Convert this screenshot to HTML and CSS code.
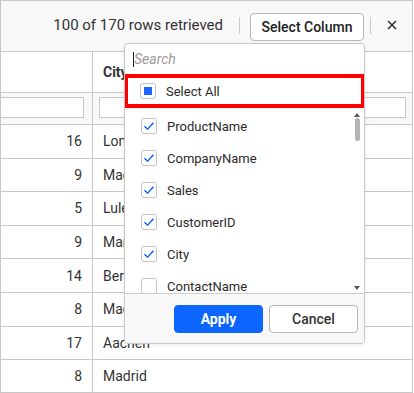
FILE: index.html
```html
<!DOCTYPE html>
<html>
<head>
<meta charset="utf-8">
<link rel="stylesheet" href="styles.css">
</head>
<body>
<div class="grid">
  <div class="toolbar">
    <span class="status">100 of 170 rows retrieved</span>
    <span class="sep sep1"></span>
    <button class="btn-select">Select Column</button>
    <span class="sep sep2"></span>
    <span class="close"><svg width="10" height="10" viewBox="0 0 10 10"><path d="M1 1L9 9M9 1L1 9" stroke="#333" stroke-width="1.6" fill="none"/></svg></span>
  </div>
  <div class="row header">
    <div class="cell num"></div>
    <div class="cell city"><b>City</b></div>
  </div>
  <div class="row filter">
    <div class="cell num"><span class="finput first"></span></div>
    <div class="cell city"><span class="finput"></span></div>
  </div>
  <div class="row data"><div class="cell num">16</div><div class="cell city">London</div></div>
  <div class="row data"><div class="cell num">9</div><div class="cell city">Madrid</div></div>
  <div class="row data"><div class="cell num">5</div><div class="cell city">Luleå</div></div>
  <div class="row data"><div class="cell num">9</div><div class="cell city">Mannheim</div></div>
  <div class="row data"><div class="cell num">14</div><div class="cell city">Berlin</div></div>
  <div class="row data"><div class="cell num">8</div><div class="cell city">Madrid</div></div>
  <div class="row data"><div class="cell num">17</div><div class="cell city">Aachen</div></div>
  <div class="row data last"><div class="cell num">8</div><div class="cell city">Madrid</div></div>

  <div class="popup">
    <div class="search"><span class="caret"></span><span class="ph">Search</span></div>
    <div class="item selectall">
      <span class="cb"><span class="ind"></span></span><span>Select All</span>
    </div>
    <div class="list">
      <div class="item"><span class="cb"><svg width="12" height="10" viewBox="0 0 12 10"><path d="M1.5 5.2L4.6 8.2L10.5 1.8" stroke="#1a6cff" stroke-width="1.6" fill="none"/></svg></span><span>ProductName</span></div>
      <div class="item"><span class="cb"><svg width="12" height="10" viewBox="0 0 12 10"><path d="M1.5 5.2L4.6 8.2L10.5 1.8" stroke="#1a6cff" stroke-width="1.6" fill="none"/></svg></span><span>CompanyName</span></div>
      <div class="item"><span class="cb"><svg width="12" height="10" viewBox="0 0 12 10"><path d="M1.5 5.2L4.6 8.2L10.5 1.8" stroke="#1a6cff" stroke-width="1.6" fill="none"/></svg></span><span>Sales</span></div>
      <div class="item"><span class="cb"><svg width="12" height="10" viewBox="0 0 12 10"><path d="M1.5 5.2L4.6 8.2L10.5 1.8" stroke="#1a6cff" stroke-width="1.6" fill="none"/></svg></span><span>CustomerID</span></div>
      <div class="item"><span class="cb"><svg width="12" height="10" viewBox="0 0 12 10"><path d="M1.5 5.2L4.6 8.2L10.5 1.8" stroke="#1a6cff" stroke-width="1.6" fill="none"/></svg></span><span>City</span></div>
      <div class="item"><span class="cb"></span><span>ContactName</span></div>
      <div class="scrollbar">
        <span class="arrow up"></span>
        <span class="thumb"></span>
        <span class="arrow down"></span>
      </div>
    </div>
    <div class="footer">
      <button class="btn apply">Apply</button>
      <button class="btn cancel">Cancel</button>
    </div>
  </div>
</div>
</body>
</html>
```
FILE: styles.css
```css
* { box-sizing: border-box; }
html, body { margin: 0; padding: 0; background: #fff; }
body {
  font-family: Roboto, "Liberation Sans", sans-serif;
  color: #333;
  width: 414px;
  height: 393px;
  overflow: hidden;
}
.grid {
  position: relative;
  width: 413px;
  height: 393px;
  border: 1px solid #c8c8c8;
  display: flex;
  flex-direction: column;
  overflow: hidden;
}
.toolbar {
  height: 51px;
  flex: none;
  background: #f8f8f8;
  border-bottom: 1px solid #c8c8c8;
  display: flex;
  align-items: center;
  justify-content: flex-end;
  padding-right: 9px;
}
.status {
  font-size: 15px;
  color: #333;
  margin-right: 16px;
  margin-top: -2px;
}
.sep {
  width: 1px;
  height: 17px;
  background: #ccc;
  margin-top: -2px;
}
.sep1 { margin-right: 10px; }
.sep2 { margin-left: 6px; margin-right: 10px; }
.btn-select {
  font-family: Roboto, "Liberation Sans", sans-serif;
  font-size: 14px;
  font-weight: 500;
  color: #222;
  background: #fff;
  border: 1px solid #b8b8b8;
  border-radius: 4px;
  width: 114px;
  height: 28px;
  padding: 0;
  margin-top: 1px;
}
.close {
  width: 22px;
  height: 20px;
  display: flex;
  align-items: center;
  justify-content: center;
  margin-top: -3px;
}
.row {
  display: flex;
  flex: none;
}
.header { height: 41px; border-bottom: 1px solid #c8c8c8; }
.header .city { font-size: 14px; color: #333; }
.filter { height: 31px; background: #f8f8f8; }
.data { height: 33.6px; border-top: 1px solid #c8c8c8; font-size: 14px; }
.cell {
  display: flex;
  align-items: center;
}
.num {
  width: 92px;
  border-right: 1px solid #c8c8c8;
  justify-content: flex-end;
  padding-right: 10px;
}
.city {
  flex: 1;
  padding-left: 10px;
}
.filter .num { padding-right: 8px; padding-left: 0; }
.filter .city { padding-left: 6px; padding-right: 6px; }
.finput {
  display: block;
  height: 21px;
  background: #fff;
  border: 1px solid #c8c8c8;
  margin-top: -2px;
  flex: 1;
}
.finput.first { border-left: none; }

.popup {
  position: absolute;
  left: 123px;
  top: 42px;
  width: 241px;
  height: 301px;
  background: #fff;
  border: 1px solid #c8c8c8;
  border-radius: 4px;
  box-shadow: 0 1px 4px rgba(0,0,0,0.08);
  display: flex;
  flex-direction: column;
  overflow: hidden;
}
.search {
  height: 30px;
  flex: none;
  display: flex;
  align-items: center;
  padding-left: 8px;
}
.caret {
  width: 1px;
  height: 15px;
  background: #222;
}
.ph {
  font-style: italic;
  font-size: 14px;
  color: #9a9a9a;
}
.item {
  height: 32px;
  flex: none;
  display: flex;
  align-items: center;
  padding-left: 16px;
  font-size: 13px;
  color: #2b2b2b;
}
.item .cb {
  width: 16px;
  height: 16px;
  border: 1px solid #c4c4c4;
  border-radius: 3px;
  background: #fff;
  margin-right: 10px;
  display: flex;
  align-items: center;
  justify-content: center;
  flex: none;
}
.ind {
  width: 8px;
  height: 8px;
  background: #1a66ff;
}
.selectall {
  height: 34px;
  border: 4px solid #ff0000;
  padding-left: 12px;
  margin: 0 -1px 0 -1px;
}
.list {
  position: relative;
  flex: 1;
  padding-top: 2px;
  overflow: hidden;
  display: flex;
  flex-direction: column;
}
.scrollbar {
  position: absolute;
  right: 3px;
  top: 4px;
  bottom: 3px;
  width: 7px;
}
.arrow {
  position: absolute;
  left: 0;
  width: 0;
  height: 0;
  border-left: 3.5px solid transparent;
  border-right: 3.5px solid transparent;
}
.arrow.up { top: 1px; border-bottom: 4px solid #555; }
.arrow.down { bottom: 0; border-top: 4px solid #555; }
.thumb {
  position: absolute;
  left: 1px;
  top: 6px;
  width: 5px;
  height: 23px;
  border-radius: 3px;
  background: #b4b4b4;
}
.footer {
  height: 50px;
  flex: none;
  background: #f8f8f8;
  border-top: 1px solid #cfcfcf;
  display: flex;
  align-items: center;
  justify-content: flex-end;
  padding-right: 6px;
  gap: 6px;
}
.btn {
  font-family: Roboto, "Liberation Sans", sans-serif;
  font-size: 14px;
  width: 89px;
  height: 28px;
  border-radius: 4px;
  padding: 0;
}
.apply {
  background: #0a66ff;
  border: 1px solid #0a66ff;
  color: #fff;
  font-weight: 700;
}
.cancel {
  background: #fff;
  border: 1px solid #b8b8b8;
  color: #333;
  font-weight: 500;
}
```
